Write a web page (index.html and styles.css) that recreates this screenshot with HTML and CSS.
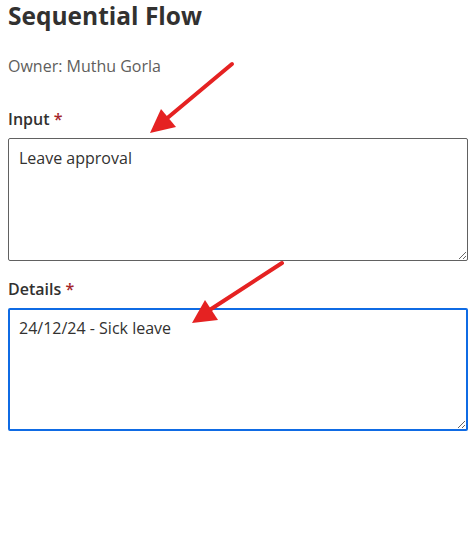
FILE: index.html
```html
<!DOCTYPE html>
<html lang="en">
<head>
  <meta charset="UTF-8">
  <title>Sequential Flow</title>
  <link rel="stylesheet" href="styles.css">
</head>
<body>
  <div class="page">
    <h1 class="title">Sequential Flow</h1>
    <p class="owner">Owner: Muthu Gorla</p>

    <div class="field">
      <label class="field-label" for="input">Input <span class="req">*</span></label>
      <textarea id="input" class="field-box">Leave approval</textarea>
    </div>

    <div class="field">
      <label class="field-label" for="details">Details <span class="req">*</span></label>
      <textarea id="details" class="field-box focused">24/12/24 - Sick leave</textarea>
    </div>

    <!-- annotation arrows drawn over the form -->
    <svg class="arrows" width="476" height="547" viewBox="0 0 476 547">
      <line x1="232" y1="64" x2="165" y2="120" stroke="#e52222" stroke-width="4" stroke-linecap="round"/>
      <polygon points="150,133 161,109 176,127" fill="#e52222"/>
      <line x1="282" y1="263" x2="205" y2="313" stroke="#e52222" stroke-width="4" stroke-linecap="round"/>
      <polygon points="192,323 205,300 218,320" fill="#e52222"/>
    </svg>
  </div>
</body>
</html>
```

FILE: styles.css
```css
body {
  margin: 0;
  font-family: 'Open Sans', 'Noto Sans', Arial, sans-serif;
  color: #323130;
  background: #fff;
}

.page {
  position: relative;
  padding: 1px 8px 0;
}

.title {
  margin: 0;
  font-size: 24.5px;
  font-weight: 700;
  line-height: 30px;
  color: #323130;
}

.owner {
  margin: 24px 0 0;
  font-size: 16px;
  line-height: 22px;
  color: #605e5c;
}

.field {
  margin-top: 31px;
  display: flex;
  flex-direction: column;
}

.field + .field {
  margin-top: 17px;
}

.field-label {
  font-size: 16px;
  font-weight: 600;
  line-height: 22px;
  margin-bottom: 8px;
}

.req {
  color: #a4262c;
}

.field-box {
  box-sizing: border-box;
  width: 460px;
  height: 123px;
  margin: 0;
  padding: 8px 10px;
  border: 1px solid #616161;
  border-radius: 2px;
  font-family: inherit;
  font-size: 16px;
  line-height: 22px;
  color: #323130;
  resize: both;
  outline: none;
}

.field-box.focused {
  border: 2px solid #0f6be4;
  padding: 7px 9px;
}

.arrows {
  position: absolute;
  top: 0;
  left: 0;
  pointer-events: none;
}
```
